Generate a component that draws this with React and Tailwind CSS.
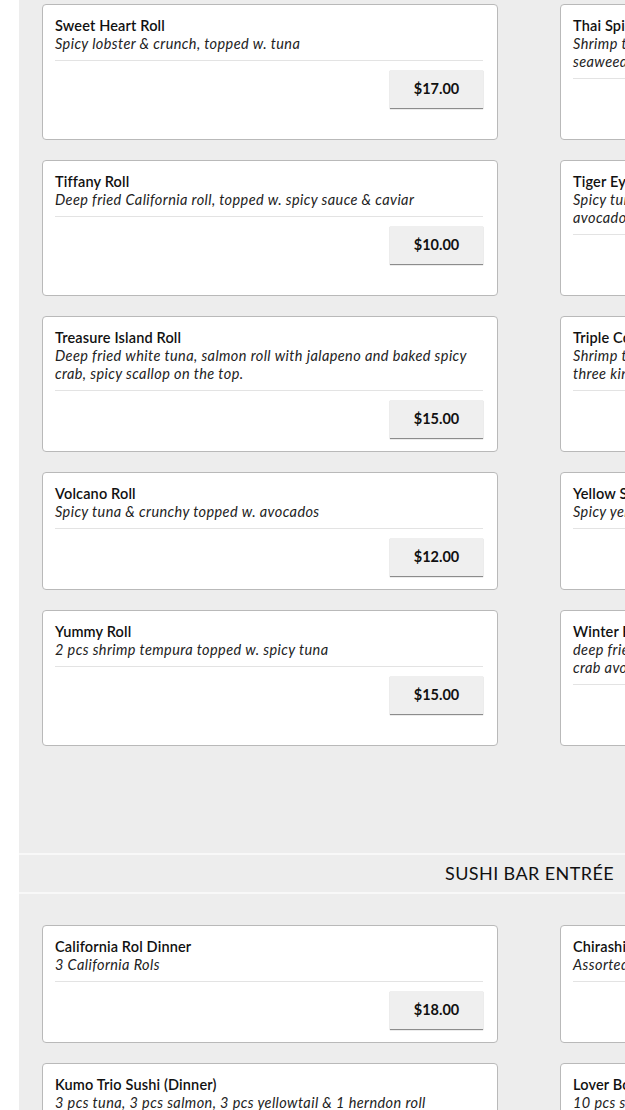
import React from 'react';

const rolls = [
  [
    { name: 'Sweet Heart Roll', desc: 'Spicy lobster & crunch, topped w. tuna', price: '$17.00' },
    { name: 'Thai Spicy Roll', desc: 'Shrimp tempura, spicy tuna, cucumber & mango wrapped in\nseaweed paper', price: '$14.00' },
  ],
  [
    { name: 'Tiffany Roll', desc: 'Deep fried California roll, topped w. spicy sauce & caviar', price: '$10.00' },
    { name: 'Tiger Eye Roll', desc: 'Spicy tuna, cucumber, crunch topped w. salmon and\navocado', price: '$13.00' },
  ],
  [
    { name: 'Treasure Island Roll', desc: 'Deep fried white tuna, salmon roll with jalapeno and baked spicy\ncrab, spicy scallop on the top.', price: '$15.00' },
    { name: 'Triple Color Roll', desc: 'Shrimp tempura, avocado, cucumber topped with\nthree kinds of fish', price: '$15.00' },
  ],
  [
    { name: 'Volcano Roll', desc: 'Spicy tuna & crunchy topped w. avocados', price: '$12.00' },
    { name: 'Yellow Sea Roll', desc: 'Spicy yellowtail topped w. avocado', price: '$13.00' },
  ],
  [
    { name: 'Yummy Roll', desc: '2 pcs shrimp tempura topped w. spicy tuna', price: '$15.00' },
    { name: 'Winter Roll', desc: 'deep fried salmon, cream cheese, topped w. spicy\ncrab avocado', price: '$14.00' },
  ],
];

const entrees = [
  [
    { name: 'California Rol Dinner', desc: '3 California Rols', price: '$18.00' },
    { name: 'Chirashi', desc: 'Assorted sashimi over sushi rice', price: '$24.00' },
  ],
  [
    { name: 'Kumo Trio Sushi (Dinner)', desc: '3 pcs tuna, 3 pcs salmon, 3 pcs yellowtail & 1 herndon roll', price: '$26.00' },
    { name: 'Lover Boat', desc: '10 pcs sushi, 20 pcs sashimi & 2 rolls', price: '$58.00' },
  ],
];

const ItemCard = ({ item }) => (
  <div className="bg-white border border-[#b9b9b9] rounded-[4px] pt-[12px] pb-[13px] pl-[12px] pr-[14px]">
    <div className="text-[14.5px] leading-[18px] font-semibold tracking-[0.15px] text-[#111]">{item.name}</div>
    <div className="text-[14.5px] leading-[18px] italic tracking-[0.4px] text-[#222] whitespace-pre-line">{item.desc}</div>
    <div className="mt-[7px] border-t border-[#e3e3e3]" />
    <div className="flex justify-end mt-[9px]">
      <div className="w-[93px] h-[38px] bg-[#efefef] shadow-[0_1px_1px_rgba(0,0,0,0.45)] flex items-center justify-center text-[14.5px] font-bold text-[#111]">
        {item.price}
      </div>
    </div>
  </div>
);

const Grid = ({ rows }) => (
  <div className="grid grid-cols-[456px_456px] gap-x-[62px] gap-y-[20px] pl-[23px]">
    {rows.flat().map((item, i) => (
      <ItemCard key={i} item={item} />
    ))}
  </div>
);

export default function App() {
  return (
    <div className="flex min-h-screen bg-white" style={{ fontFamily: 'Lato, "Noto Sans", sans-serif' }}>
      <div className="w-[19px] shrink-0 bg-white" />
      <div className="flex-1 bg-[#ededed] overflow-hidden pt-[4px]">
        <Grid rows={rolls} />
        <div className="mt-[107px] h-[41px] border-y-2 border-[#f8f8f8] flex items-center justify-end pr-[11px]">
          <h2 className="text-[18px] text-[#111] tracking-[0.4px]">SUSHI BAR ENTRÉE</h2>
        </div>
        <div className="pt-[31px] pb-[40px]">
          <Grid rows={entrees} />
        </div>
      </div>
    </div>
  );
}
